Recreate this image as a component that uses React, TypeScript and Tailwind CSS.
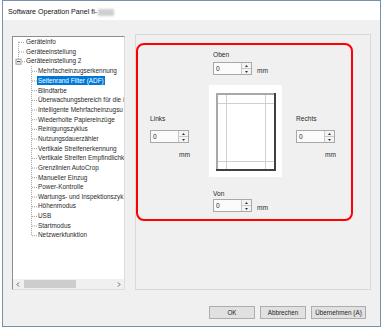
import React from "react";

const rootItems = ["Geräteinfo", "Geräteeinstellung", "Geräteeinstellung 2"];

const childItems = [
  "Mehrfacheinzugserkennung",
  "Seitenrand Filter (ADF)",
  "Blindfarbe",
  "Überwachungsbereich für die I",
  "Intelligente Mehrfacheinzugsu",
  "Wiederholte Papiereinzüge",
  "Reinigungszyklus",
  "Nutzungsdauerzähler",
  "Vertikale Streifenerkennung",
  "Vertikale Streifen Empfindlichk",
  "Grenzlinien AutoCrop",
  "Manueller Einzug",
  "Power-Kontrolle",
  "Wartungs- und Inspektionszyk",
  "Höhenmodus",
  "USB",
  "Startmodus",
  "Netzwerkfunktion",
];

const ROW = 9.67;

const TreeLines = () => {
  const c = (i: number) => i * ROW + ROW / 2;
  return (
    <svg className="absolute left-0 top-0" width="111" height="242">
      <g stroke="#a0a0a0" strokeWidth="1" strokeDasharray="1 1" fill="none">
        <line x1="5.5" y1={c(0)} x2="5.5" y2={c(2) - 2.5} />
        {[0, 1].map((i) => (
          <line key={i} x1="6" y1={c(i) + 0.5} x2="12" y2={c(i) + 0.5} />
        ))}
        <line x1="9" y1={c(2) + 0.5} x2="12" y2={c(2) + 0.5} />
        <line x1="18.5" y1={c(2) + 5} x2="18.5" y2={c(20) + 0.5} />
        {childItems.map((_, i) => (
          <line key={i} x1="19" y1={c(i + 3) + 0.5} x2="24" y2={c(i + 3) + 0.5} />
        ))}
      </g>
      {/* expander box */}
      <rect x="3" y={c(2) - 2} width="5" height="5" fill="white" stroke="#9a9a9a" strokeWidth="1" />
      <line x1="4" y1={c(2) + 0.5} x2="7" y2={c(2) + 0.5} stroke="#333" strokeWidth="1" />
    </svg>
  );
};

const Tree = () => (
  <div className="w-[113px] h-[254px] mt-[16px] border-l border-t border-r border-b border-l-[#8d8d8d] border-t-[#8d8d8d] border-r-[#dcdcdc] border-b-[#dcdcdc] bg-white flex flex-col text-[6.4px] text-[#2a2a2a]">
    <div className="relative h-[242px] overflow-hidden">
      <TreeLines />
      <div className="relative flex flex-col">
        {rootItems.map((t) => (
          <div key={t} className="h-[9.67px] flex items-center pl-[13px] whitespace-nowrap">
            {t}
          </div>
        ))}
        {childItems.map((t) => (
          <div key={t} className="h-[9.67px] flex items-center pl-[24px] whitespace-nowrap">
            <span
              className={
                t === "Seitenrand Filter (ADF)"
                  ? "bg-[#0078d7] text-white px-[1px] leading-[9px]"
                  : "px-[1px] leading-[9px]"
              }
            >
              {t}
            </span>
          </div>
        ))}
      </div>
    </div>
    <div className="h-[10px] flex items-center bg-[#f0f0f0]">
      <div className="w-[10px] flex justify-center">
        <svg width="4" height="5">
          <path d="M3 0.5 L1 2.5 L3 4.5" stroke="#606060" fill="none" />
        </svg>
      </div>
      <div className="ml-[1px] w-[52px] h-[8px] bg-[#cdcdcd]" />
      <div className="flex-1" />
      <div className="w-[10px] flex justify-center">
        <svg width="4" height="5">
          <path d="M1 0.5 L3 2.5 L1 4.5" stroke="#606060" fill="none" />
        </svg>
      </div>
    </div>
  </div>
);

const SpinBox = () => (
  <div className="w-[39px] h-[13px] border border-[#a8a8a8] bg-[#fbfbfb] flex">
    <div className="flex-1 pl-[2px] leading-[11px]">0</div>
    <div className="w-[10px] flex flex-col border-l border-[#c8c8c8]">
      <div className="flex-1 flex items-center justify-center border-b border-[#c8c8c8] bg-[#f4f4f4]">
        <svg width="3" height="2">
          <path d="M0 2 L1.5 0 L3 2 Z" fill="#333" />
        </svg>
      </div>
      <div className="flex-1 flex items-center justify-center bg-[#f4f4f4]">
        <svg width="3" height="2">
          <path d="M0 0 L1.5 2 L3 0 Z" fill="#333" />
        </svg>
      </div>
    </div>
  </div>
);

const PagePreview = () => (
  <div className="w-[73px] h-[92px] bg-white mt-[10px]">
    <svg width="73" height="92">
      <rect x="7" y="8" width="60" height="78" fill="white" />
      <g stroke="#cfcfcf" strokeWidth="1">
        <line x1="9" y1="18.5" x2="65" y2="18.5" />
        <line x1="9" y1="76.5" x2="65" y2="76.5" />
        <line x1="17.5" y1="10" x2="17.5" y2="84" />
        <line x1="56.5" y1="10" x2="56.5" y2="84" />
      </g>
      <path d="M8 85 L8 9 L66 9" stroke="#a8a8a8" strokeWidth="2" fill="none" />
      <path d="M66 8 L66 85 L7 85" stroke="#404040" strokeWidth="2" fill="none" />
    </svg>
  </div>
);

const MarginPanel = () => (
  <div className="w-[236px] h-[256px] mt-[14px] ml-[10px] border border-[#d9d9d9] text-[6.6px] text-[#2a2a2a]">
    <div className="w-[217px] h-[178px] mt-[8px] border-2 border-[#ff0000] rounded-[8px] flex">
      <div className="w-[71px] pl-[12px] pt-[69px] flex flex-col">
        <div className="leading-[9px]">Links</div>
        <div className="mt-[7px]">
          <SpinBox />
        </div>
        <div className="mt-[7px] w-[40px] text-right leading-[9px]">mm</div>
      </div>
      <div className="w-[73px] pt-[5px] flex flex-col">
        <div className="pl-[4px] leading-[9px]">Oben</div>
        <div className="pl-[4px] mt-[3px] flex items-end gap-[5px]">
          <SpinBox />
          <span className="leading-[9px]">mm</span>
        </div>
        <PagePreview />
        <div className="pl-[4px] mt-[12px] leading-[9px]">Von</div>
        <div className="pl-[4px] mt-[1px] flex items-end gap-[5px]">
          <SpinBox />
          <span className="leading-[9px]">mm</span>
        </div>
      </div>
      <div className="flex-1 pl-[14px] pt-[69px] flex flex-col">
        <div className="leading-[9px]">Rechts</div>
        <div className="mt-[7px]">
          <SpinBox />
        </div>
        <div className="mt-[7px] w-[40px] text-right leading-[9px]">mm</div>
      </div>
    </div>
  </div>
);

const Button = ({ label, w }: { label: string; w: string }) => (
  <div className={`${w} h-[13px] border border-[#adadad] bg-[#e1e1e1] flex items-center justify-center`}>
    {label}
  </div>
);

export default function App() {
  return (
    <div className="w-[382px] h-[328px] bg-white font-['Liberation_Sans',Arial,sans-serif] text-[6.3px] text-[#1e1e1e]">
      <div className="ml-[2px] w-[379px] h-[327px] border border-[#7690b0] flex flex-col">
        <div className="h-[19px] bg-white flex items-center pl-[5px] pt-[3px] text-[7.1px] text-[#111]">
          <span>Software Operation Panel fi-</span>
          <span className="ml-[1px] w-[16px] h-[7px] bg-[#cfcfcf] blur-[1px]" />
        </div>
        <div className="flex-1 bg-[#f0f0f0] flex flex-col">
          <div className="flex items-start pl-[9px]">
            <Tree />
            <MarginPanel />
          </div>
          <div className="mt-[16px] flex justify-end gap-[5px] pr-[14px]">
            <Button label="OK" w="w-[46px]" />
            <Button label="Abbrechen" w="w-[46px]" />
            <Button label="Übernehmen (A)" w="w-[55px]" />
          </div>
        </div>
      </div>
    </div>
  );
}
